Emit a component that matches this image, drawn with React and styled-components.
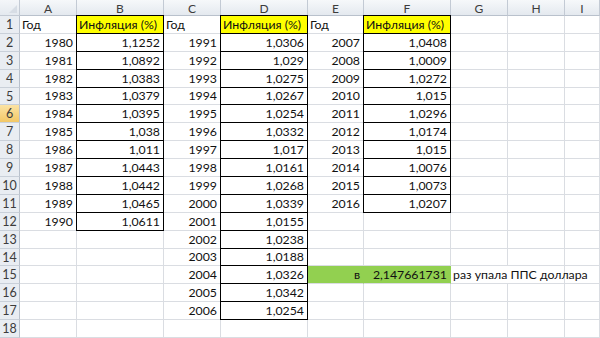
import React from "react";
import styled, { createGlobalStyle, css } from "styled-components";

const Global = createGlobalStyle`
  html, body { margin: 0; padding: 0; background: #fff; }
  body { width: 600px; height: 338px; overflow: hidden; }
`;

const Sheet = styled.div`
  display: grid;
  grid-template-columns: 20px 57px 87px 57px 87px 56px 87px 57px 57px 1fr;
  grid-template-rows: 16px repeat(18, 17.9px);
  width: 600px;
  height: 338px;
  overflow: hidden;
  font-family: Lato, "Liberation Sans", sans-serif;
  font-size: 12.3px;
  color: #111;
  background: #fff;
`;

const Corner = styled.div`
  position: relative;
  box-sizing: border-box;
  background: linear-gradient(#f4f6f9, #e4e9ef);
  border-right: 1px solid #c3cad4;
  border-bottom: 1px solid #c3cad4;
  &::after {
    content: "";
    position: absolute;
    right: 2px;
    bottom: 2px;
    width: 0;
    height: 0;
    border-left: 8px solid transparent;
    border-bottom: 8px solid #d7dde5;
  }
`;

const ColHeader = styled.div`
  box-sizing: border-box;
  background: linear-gradient(#f6f8fa, #e4e9ef);
  border-right: 1px solid #c3cad4;
  border-bottom: 1px solid #b9c1cc;
  display: flex;
  align-items: center;
  justify-content: center;
  font-size: 12px;
  color: #3c3c3c;
  padding-top: 1px;
`;

const RowHeader = styled.div`
  box-sizing: border-box;
  border-right: 1px solid #b9c1cc;
  border-bottom: 1px solid #c9d0d9;
  display: flex;
  align-items: center;
  justify-content: center;
  font-size: 12.5px;
  color: #3c3c3c;
  background: ${(p) =>
    p.$active ? "linear-gradient(#fbe3a4, #f3c866)" : "#e9edf2"};
`;

const Cell = styled.div`
  box-sizing: border-box;
  min-width: 0;
  white-space: nowrap;
  display: flex;
  align-items: flex-end;
  padding: 0 3px 1px 2px;
  border-right: 1px solid #dadde2;
  border-bottom: 1px solid #dadde2;
  justify-content: ${(p) => (p.$right ? "flex-end" : "flex-start")};
  background: ${(p) => p.$fill || "transparent"};
  ${(p) =>
    p.$fill &&
    !p.$boxed &&
    css`
      border-right-color: ${p.$fill};
    `}
  ${(p) =>
    p.$boxed &&
    css`
      border-right: 1px solid #000;
      border-bottom: 1px solid #000;
      box-shadow: -1px 0 0 #000 ${p.$top ? ", 0 -1px 0 #000, -1px -1px 0 #000" : ""};
    `}
  ${(p) =>
    p.$span &&
    css`
      grid-column: span ${p.$span};
      overflow: visible;
    `}
`;

const COLS = ["A", "B", "C", "D", "E", "F", "G", "H", "I"];

const B = ["1,1252", "1,0892", "1,0383", "1,0379", "1,0395", "1,038", "1,011", "1,0443", "1,0442", "1,0465", "1,0611"];
const D = ["1,0306", "1,029", "1,0275", "1,0267", "1,0254", "1,0332", "1,017", "1,0161", "1,0268", "1,0339", "1,0155", "1,0238", "1,0188", "1,0326", "1,0342", "1,0254"];
const F = ["1,0408", "1,0009", "1,0272", "1,015", "1,0296", "1,0174", "1,015", "1,0076", "1,0073", "1,0207"];

function cellsFor(r) {
  const c = {};
  if (r === 1) {
    c.A = { text: "Год" };
    c.B = { text: "Инфляция (%)", fill: "#ffff00", boxed: true, top: true };
    c.C = { text: "Год" };
    c.D = { text: "Инфляция (%)", fill: "#ffff00", boxed: true, top: true };
    c.E = { text: "Год" };
    c.F = { text: "Инфляция (%)", fill: "#ffff00", boxed: true, top: true };
  } else {
    const i = r - 2;
    if (i < B.length) {
      c.A = { text: String(1980 + i), right: true };
      c.B = { text: B[i], right: true, boxed: true };
    }
    if (i < D.length) {
      c.C = { text: String(1991 + i), right: true };
      c.D = { text: D[i], right: true, boxed: true };
    }
    if (i < F.length) {
      c.E = { text: String(2007 + i), right: true };
      c.F = { text: F[i], right: true, boxed: true };
    }
    if (r === 15) {
      c.E = { text: "в", right: true, fill: "#92d050" };
      c.F = { text: "2,147661731", right: true, fill: "#92d050" };
      c.G = { text: "раз упала ППС доллара", span: 2 };
      c.H = { skip: true };
    }
  }
  return c;
}

export default function App() {
  const rows = [];
  for (let r = 1; r <= 18; r++) {
    const c = cellsFor(r);
    rows.push(
      <RowHeader key={`rh${r}`} $active={r === 6}>
        {r}
      </RowHeader>
    );
    COLS.forEach((col) => {
      const d = c[col] || {};
      if (d.skip) return;
      rows.push(
        <Cell
          key={`${col}${r}`}
          $right={d.right}
          $fill={d.fill}
          $boxed={d.boxed}
          $top={d.top}
          $span={d.span}
        >
          {d.text || ""}
        </Cell>
      );
    });
  }
  return (
    <>
      <Global />
      <Sheet>
        <Corner />
        {COLS.map((c) => (
          <ColHeader key={c}>{c}</ColHeader>
        ))}
        {rows}
      </Sheet>
    </>
  );
}
